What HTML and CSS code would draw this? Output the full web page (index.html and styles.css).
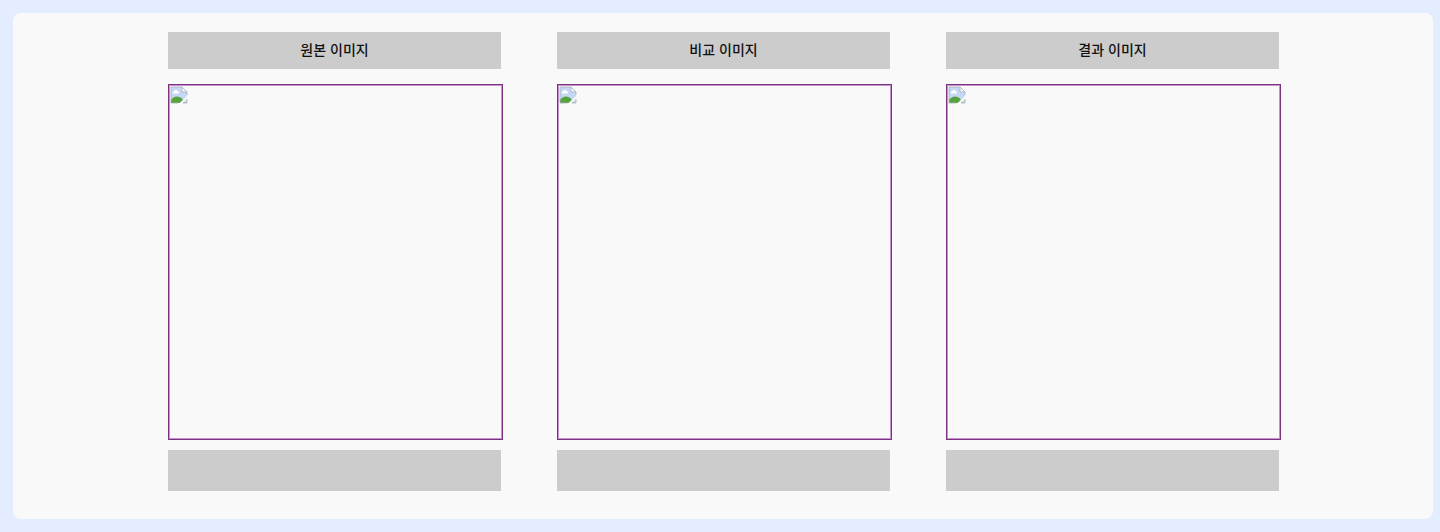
FILE: index.html
```html
<!DOCTYPE html>
<html lang="ko">
<head>
    <meta charset="UTF-8">
    <meta name="viewport" content="width=device-width, initial-scale=1.0">
    <title>이미지 비교</title>
    <link rel="stylesheet" href="styles.css">
</head>
<body>
    <svg class="defs" width="0" height="0" aria-hidden="true">
        <symbol id="empty-image" viewBox="0 0 18 18">
            <path d="M1 1H12L17 6V17H1Z" fill="#c5d7f5"/>
            <path d="M3 7.5C2 6 4 5 4.5 5C5.5 3 8 4 8 5.5C9.5 6 9 7.5 8.5 7.5Z" fill="#fff"/>
            <path d="M1 17V14C4 10 9 9 13 14L15 17Z" fill="#56a33e"/>
            <path d="M8.5 18L18 9V12L12 18Z" fill="#f9f9f9"/>
            <path d="M12 1V6H17Z" fill="#f4f6fa"/>
            <path d="M8 17H1V1H12L17 6V9M12 1V6H17M17 13V17H13" fill="none" stroke="#a9afba" stroke-width="0.8"/>
        </symbol>
    </svg>

    <main class="container">
        <section class="column">
            <h2 class="title">원본 이미지</h2>
            <div class="preview">
                <svg class="icon" aria-hidden="true"><use href="#empty-image"/></svg>
            </div>
            <div class="info"></div>
        </section>
        <section class="column">
            <h2 class="title">비교 이미지</h2>
            <div class="preview">
                <svg class="icon" aria-hidden="true"><use href="#empty-image"/></svg>
            </div>
            <div class="info"></div>
        </section>
        <section class="column">
            <h2 class="title">결과 이미지</h2>
            <div class="preview">
                <svg class="icon" aria-hidden="true"><use href="#empty-image"/></svg>
            </div>
            <div class="info"></div>
        </section>
    </main>
</body>
</html>
```

FILE: styles.css
```css
* {
    box-sizing: border-box;
}
body {
    font-family: 'Noto Sans CJK KR', sans-serif;
    background-color: #e3edff;
    color: #111111;
    margin: 0;
    padding: 13px 7px 13px 13px;
}
.defs {
    display: none;
}
.container {
    display: grid;
    grid-template-columns: repeat(3, 1fr);
    gap: 56px;
    padding: 19px 154px 28px 155px;
    background-color: #f9f9f9;
    border-radius: 8px;
}
.title {
    margin: 0 0 15px;
    padding: 7px 8px 10px;
    background-color: #cccccc;
    font-size: 14px;
    font-weight: 500;
    line-height: 20px;
    text-align: center;
}
.preview {
    width: calc(100% + 2px);
    height: 356px;
    margin-bottom: 10px;
    padding: 1px;
    border: 1px solid #7a3380;
    box-shadow: inset 0 0 0 1px #c78fcb;
}
.icon {
    display: block;
    width: 18px;
    height: 18px;
}
.info {
    height: 41px;
    background-color: #cccccc;
}
```
